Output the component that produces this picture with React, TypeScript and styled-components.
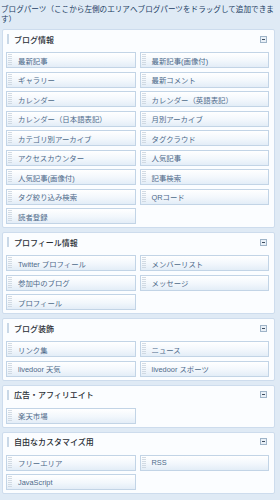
import * as React from "react";
import styled, { createGlobalStyle } from "styled-components";

type Section = { title: string; items: string[] };

const sections: Section[] = [
  {
    title: "ブログ情報",
    items: [
      "最新記事",
      "最新記事(画像付)",
      "ギャラリー",
      "最新コメント",
      "カレンダー",
      "カレンダー（英語表記）",
      "カレンダー（日本語表記）",
      "月別アーカイブ",
      "カテゴリ別アーカイブ",
      "タグクラウド",
      "アクセスカウンター",
      "人気記事",
      "人気記事(画像付)",
      "記事検索",
      "タグ絞り込み検索",
      "QRコード",
      "読者登録",
    ],
  },
  {
    title: "プロフィール情報",
    items: ["Twitter プロフィール", "メンバーリスト", "参加中のブログ", "メッセージ", "プロフィール"],
  },
  {
    title: "ブログ装飾",
    items: ["リンク集", "ニュース", "livedoor 天気", "livedoor スポーツ"],
  },
  {
    title: "広告・アフィリエイト",
    items: ["楽天市場"],
  },
  {
    title: "自由なカスタマイズ用",
    items: ["フリーエリア", "RSS", "JavaScript"],
  },
];

function App() {
  return (
    <>
      <GlobalStyle />
      <Page>
        <Title>
          ブログパーツ（ここから左側のエリアへブログパーツをドラッグして追加できます）
        </Title>
        {sections.map((s) => (
          <Card key={s.title}>
            <Head>
              <HeadBar />
              <HeadText>{s.title}</HeadText>
              <Toggle />
            </Head>
            <Grid>
              {s.items.map((item) => (
                <Part key={item}>
                  <Grip />
                  <PartText>{item}</PartText>
                </Part>
              ))}
            </Grid>
          </Card>
        ))}
      </Page>
    </>
  );
}

export default App;

const GlobalStyle = createGlobalStyle`
  html, body {
    margin: 0;
    padding: 0;
    background: #dfeaf5;
  }
  body {
    font-family: "Liberation Sans", "Noto Sans CJK JP", sans-serif;
  }
`;

const Page = styled.div`
  width: 280px;
  height: 500px;
  overflow: hidden;
  background: #dfeaf5;
  display: flex;
  flex-direction: column;
  gap: 4px;
`;

const Title = styled.div`
  box-sizing: border-box;
  width: 279px;
  height: 25px;
  flex-shrink: 0;
  padding: 5px 0 0 1px;
  font-size: 7.6px;
  line-height: 9.5px;
  color: #1d3d63;
  line-break: strict;
`;

const Card = styled.section`
  flex-shrink: 0;
  margin-left: 2px;
  width: 273px;
  box-sizing: border-box;
  border: 1px solid #cddced;
  border-radius: 2px;
  background: #fbfdff;
  padding: 0 5px 3px 3px;
`;

const Head = styled.div`
  height: 18px;
  margin-bottom: 4px;
  display: flex;
  align-items: center;
`;

const HeadBar = styled.span`
  width: 2px;
  height: 10px;
  background: #c9d8e7;
  margin: 0 5px 0 1px;
`;

const HeadText = styled.span`
  flex: 1;
  font-size: 8px;
  color: #2a2f36;
  font-weight: 500;
`;

const Toggle = styled.span`
  width: 7px;
  height: 7px;
  box-sizing: border-box;
  border: 1px solid #9fb4c8;
  background: #e9f0f7;
  margin-right: 2px;
  display: flex;
  align-items: center;
  justify-content: center;

  &::after {
    content: "";
    width: 3px;
    height: 1px;
    background: #3c4d60;
  }
`;

const Grid = styled.div`
  display: grid;
  grid-template-columns: 1fr 1fr;
  grid-auto-rows: 16px;
  column-gap: 4px;
  row-gap: 3.5px;
`;

const Part = styled.div`
  display: flex;
  align-items: center;
  box-sizing: border-box;
  border: 1px solid #c2d4e6;
  background: linear-gradient(#ffffff, #f2f7fc 55%, #e3edf7);
  overflow: hidden;
`;

const Grip = styled.span`
  width: 4px;
  align-self: stretch;
  margin: 1px 6px 1px 1px;
  background: repeating-linear-gradient(
    to bottom,
    #c9d3dd 0px,
    #c9d3dd 1px,
    transparent 1px,
    transparent 2px
  );
  opacity: 0.8;
`;

const PartText = styled.span`
  font-size: 7.4px;
  color: #4e6a8a;
  white-space: nowrap;
`;
